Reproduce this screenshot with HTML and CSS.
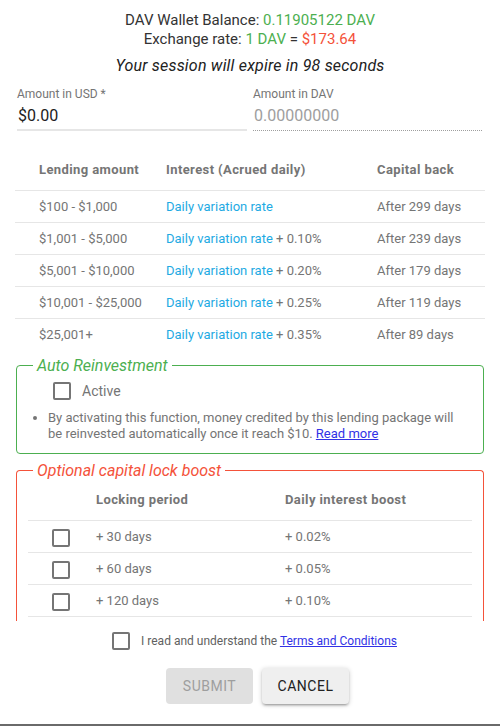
FILE: index.html
```html
<!DOCTYPE html>
<html>
<head>
<meta charset="utf-8">
<link rel="stylesheet" href="styles.css">
</head>
<body>
<div class="dialog">
  <div class="content">
    <div class="summary">
      <div class="line">DAV Wallet Balance: <span class="green">0.11905122 DAV</span></div>
      <div class="line">Exchange rate: <span class="green">1 DAV</span> = <span class="red">$173.64</span></div>
      <div class="session">Your session will expire in 98 seconds</div>
    </div>

    <div class="fields">
      <div class="field">
        <div class="label">Amount in USD *</div>
        <div class="value">$0.00</div>
        <div class="underline"></div>
      </div>
      <div class="field disabled">
        <div class="label">Amount in DAV</div>
        <div class="value">0.00000000</div>
        <div class="underline dotted"></div>
      </div>
    </div>

    <table class="rates">
      <thead>
        <tr><th class="c1">Lending amount</th><th class="c2">Interest (Acrued daily)</th><th class="c3">Capital back</th></tr>
      </thead>
      <tbody>
        <tr><td>$100 - $1,000</td><td><span class="blue">Daily variation rate</span></td><td>After 299 days</td></tr>
        <tr><td>$1,001 - $5,000</td><td><span class="blue">Daily variation rate</span> + 0.10%</td><td>After 239 days</td></tr>
        <tr><td>$5,001 - $10,000</td><td><span class="blue">Daily variation rate</span> + 0.20%</td><td>After 179 days</td></tr>
        <tr><td>$10,001 - $25,000</td><td><span class="blue">Daily variation rate</span> + 0.25%</td><td>After 119 days</td></tr>
        <tr class="last"><td>$25,001+</td><td><span class="blue">Daily variation rate</span> + 0.35%</td><td>After 89 days</td></tr>
      </tbody>
    </table>

    <fieldset class="box auto">
      <legend>Auto Reinvestment</legend>
      <div class="check-row">
        <span class="checkbox"></span>
        <span class="check-label">Active</span>
      </div>
      <ul class="notes">
        <li>By activating this function, money credited by this lending package will be reinvested automatically once it reach $10. <a class="link" href="#">Read more</a></li>
      </ul>
    </fieldset>

    <fieldset class="box lock">
      <legend>Optional capital lock boost</legend>
      <table class="locks">
        <thead>
          <tr><th class="l1"></th><th class="l2">Locking period</th><th class="l3">Daily interest boost</th></tr>
        </thead>
        <tbody>
          <tr><td><span class="checkbox"></span></td><td>+ 30 days</td><td>+ 0.02%</td></tr>
          <tr><td><span class="checkbox"></span></td><td>+ 60 days</td><td>+ 0.05%</td></tr>
          <tr><td><span class="checkbox"></span></td><td>+ 120 days</td><td>+ 0.10%</td></tr>
        </tbody>
      </table>
    </fieldset>
  </div>

  <div class="actions">
    <div class="terms">
      <span class="checkbox"></span>
      <span class="terms-text">I read and understand the <a class="link" href="#">Terms and Conditions</a></span>
    </div>
    <div class="buttons">
      <button class="btn submit">Submit</button>
      <button class="btn cancel">Cancel</button>
    </div>
  </div>
  <div class="edge"></div>
</div>
</body>
</html>
```

FILE: styles.css
```css
* { box-sizing: border-box; }
html, body { margin: 0; padding: 0; background: #fff; }
body { font-family: Roboto, "Noto Sans", sans-serif; color: #212121; }

.dialog {
  width: 500px;
  height: 726px;
  display: flex;
  flex-direction: column;
  overflow: hidden;
}

.content {
  height: 621px;
  overflow: hidden;
  padding: 11px 15px 0 15px;
  flex: none;
}

.summary { text-align: center; }
.line { font-size: 15px; line-height: 19px; color: #333; }
.green { color: #4caf50; }
.red { color: #f4523a; }
.session {
  font-size: 16px;
  line-height: 19px;
  font-style: italic;
  margin-top: 7px;
  color: #212121;
  letter-spacing: 0.2px;
}

.fields {
  display: grid;
  grid-template-columns: 230px 229px;
  column-gap: 6px;
  padding: 0 0 0 2px;
  margin-top: 12px;
}
.label { font-size: 12px; line-height: 14px; color: #757575; }
.value { font-size: 16px; line-height: 19px; margin-top: 5px; color: #212121; padding-left: 1px; }
.field.disabled .value { color: #9e9e9e; }
.underline { height: 2px; margin-top: 4px; background: #e6e6e6; }
.underline.dotted { height: 0; background: none; border-bottom: 1px dotted #9e9e9e; margin-top: 5px; }

.rates {
  width: 470px;
  border-collapse: collapse;
  margin-top: 19px;
  font-size: 13px;
  color: #757575;
}
.rates th, .locks th {
  font-weight: 700;
  text-align: left;
  height: 40px;
  padding: 0 0 0 24px;
  letter-spacing: 0.4px;
  color: #757575;
  border-bottom: 1px solid #e6e6e6;
}
.rates td, .locks td {
  height: 32px;
  padding: 0 0 0 24px;
  border-bottom: 1px solid #e6e6e6;
  white-space: nowrap;
}
.rates tr.last td { border-bottom: none; }
.rates .c1 { width: 127px; }
.rates .c2 { width: 211px; }
.rates .c3 { width: 132px; }
.blue { color: #1eaae3; }

.box {
  margin: 6px 1px 0 1px;
  padding: 0 16px;
  border-radius: 4px;
  min-width: 0;
}
.box legend {
  font-size: 16px;
  line-height: 19px;
  font-style: italic;
  padding: 0 4px;
}
.auto { border: 1px solid #4caf50; padding-bottom: 11px; }
.auto legend { color: #4caf50; }
.lock { border: 1px solid #f4523a; border-bottom: none; padding: 0 11px; margin-top: 7px; height: 200px; }
.lock legend { color: #f4523a; margin-left: 5px; }

.check-row {
  display: flex;
  align-items: center;
  height: 24px;
  margin-top: 4px;
  padding-left: 20px;
}
.checkbox {
  display: inline-block;
  width: 18px;
  height: 18px;
  border: 2px solid #757575;
  border-radius: 2px;
  flex: none;
  vertical-align: middle;
}
.check-label { margin-left: 11px; font-size: 14px; color: #757575; }

.notes {
  margin: 7px 0 0 0;
  padding-left: 15px;
  font-size: 13px;
  line-height: 16px;
  color: #757575;
}
.link { color: #3232e6; text-decoration: underline; }

.locks {
  width: 444px;
  border-collapse: collapse;
  font-size: 13px;
  color: #757575;
}
.locks .l1 { width: 44px; }
.locks .l2 { width: 189px; }
.locks .l3 { width: 211px; }
.locks td:first-child { padding-top: 3px; }

.actions {
  flex: 1;
  display: flex;
  flex-direction: column;
  align-items: center;
}
.terms {
  display: flex;
  align-items: center;
  margin-top: 11px;
  padding-left: 9px;
  height: 18px;
}
.terms-text { margin-left: 11px; font-size: 12px; color: #616161; }
.buttons {
  display: flex;
  gap: 9px;
  margin-top: 18px;
  padding-left: 15px;
}
.btn {
  width: 87px;
  height: 36px;
  border: none;
  border-radius: 4px;
  font-family: Roboto, sans-serif;
  font-size: 14px;
  text-transform: uppercase;
  letter-spacing: 0.5px;
  font-weight: 400;
}
.submit { background: #e0e0e0; color: #9e9e9e; }
.cancel {
  background: #efefef;
  color: #212121;
  box-shadow: 0 1px 5px rgba(0,0,0,0.2), 0 2px 2px rgba(0,0,0,0.14), 0 3px 1px -2px rgba(0,0,0,0.12);
}
.edge { height: 2px; background: #6a6a6a; flex: none; }
```
